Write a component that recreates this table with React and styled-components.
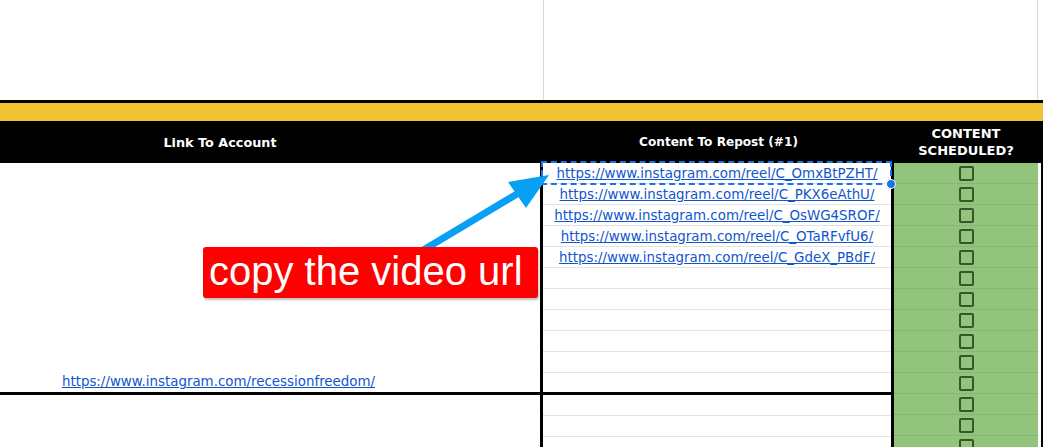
import styled, { createGlobalStyle } from "styled-components"

const GlobalStyle = createGlobalStyle`
  body {
    margin: 0;
    background: #fff;
    overflow: hidden;
  }
`

const Sheet = styled.div`
  position: relative;
  width: 1043px;
  height: 447px;
  overflow: hidden;
  font-family: "DejaVu Sans", "Liberation Sans", sans-serif;
`

const TopArea = styled.div`
  height: 100px;
  display: grid;
  grid-template-columns: 543px 495px 5px;
`

const TopGridCell = styled.div`
  border-left: 1px solid #dadada;
  border-right: 1px solid #dadada;
`

const BlackRule = styled.div`
  height: 3px;
  background: #000;
`

const YellowBand = styled.div`
  height: 18px;
  background: #f1c232;
`

const HeaderBar = styled.div`
  height: 42px;
  background: #000;
  display: grid;
  grid-template-columns: 543px 351px 144px 5px;
`

const HeaderCell = styled.div`
  display: flex;
  align-items: center;
  justify-content: center;
  text-align: center;
  padding-right: ${(p) => p.$shift || 0}px;
  color: #fff;
  font-weight: bold;
  font-size: ${(p) => p.$size || 12}px;
  line-height: 17px;
`

const Body = styled.div`
  display: flex;
`

const LeftPane = styled.div`
  width: 894px;
  display: flex;
  flex-direction: column;
`

const Section = styled.div`
  display: grid;
  grid-template-columns: 543px 351px;
  border-bottom: ${(p) => (p.$ruled ? "3px solid #000" : "none")};
`

const AccountCell = styled.div`
  box-sizing: border-box;
  border-right: 3px solid #000;
  display: flex;
  align-items: flex-end;
  justify-content: center;
  padding: 0 103px 3px 0;
`

const RepostColumn = styled.div`
  box-sizing: border-box;
  border-right: 3px solid #000;
  display: flex;
  flex-direction: column;
`

const RepostRow = styled.div`
  position: relative;
  box-sizing: border-box;
  height: ${(p) => p.$h}px;
  border-bottom: ${(p) => (p.$last ? "none" : "1px solid #e2e2e2")};
  display: flex;
  align-items: center;
  justify-content: center;
`

const SheetLink = styled.a`
  color: #1155cc;
  font-size: 13.4px;
  text-decoration: underline;
  white-space: nowrap;
`

const Selection = styled.div`
  position: absolute;
  left: -2px;
  top: -2px;
  right: -1px;
  bottom: -2px;
  border: 2px dashed #1a73e8;
  pointer-events: none;
`

const Handle = styled.div`
  position: absolute;
  right: -6px;
  bottom: -6px;
  width: 8px;
  height: 8px;
  border-radius: 50%;
  background: #1a73e8;
  border: 1px solid #fff;
`

const CheckColumn = styled.div`
  width: 144px;
  background: #93c47d;
  display: flex;
  flex-direction: column;
`

const CheckRow = styled.div`
  box-sizing: border-box;
  height: 21px;
  border-bottom: 1px solid #85b76f;
  display: flex;
  align-items: center;
  justify-content: center;
  padding-top: 1px;
`

const Checkbox = styled.div`
  box-sizing: border-box;
  width: 15px;
  height: 15px;
  border: 2px solid #37572a;
  border-radius: 2px;
`

const Edge = styled.div`
  width: 3px;
  background: #fff;
  border-right: 2px solid #000;
`

const Callout = styled.div`
  position: absolute;
  left: 203px;
  top: 247px;
  width: 335px;
  height: 51px;
  box-sizing: border-box;
  padding-left: 6px;
  padding-bottom: 4px;
  display: flex;
  align-items: center;
  background: #ff0000;
  border-radius: 3px;
  box-shadow: 1px 2px 2px rgba(0, 0, 0, 0.25);
  color: #fff;
  font-family: "Liberation Sans", Arial, sans-serif;
  font-size: 40px;
  line-height: 1;
`

const ArrowLayer = styled.svg`
  position: absolute;
  left: 0;
  top: 0;
  pointer-events: none;
`

const reels = ["C_OmxBtPZHT", "C_PKX6eAthU", "C_OsWG4SROF", "C_OTaRFvfU6", "C_GdeX_PBdF"]

const firstRows = Array.from({ length: 11 }, (_, i) => reels[i] || null)

export default function App() {
  return (
    <Sheet>
      <GlobalStyle />
      <TopArea>
        <div />
        <TopGridCell />
        <div />
      </TopArea>
      <BlackRule />
      <YellowBand />
      <HeaderBar>
        <HeaderCell $shift={103} $size={12.8}>Link To Account</HeaderCell>
        <HeaderCell $size={12.1}>Content To Repost (#1)</HeaderCell>
        <HeaderCell $size={13}>
          CONTENT
          <br />
          SCHEDULED?
        </HeaderCell>
        <div />
      </HeaderBar>
      <Body>
        <LeftPane>
          <Section $ruled>
            <AccountCell>
              <SheetLink>https://www.instagram.com/recessionfreedom/</SheetLink>
            </AccountCell>
            <RepostColumn>
              {firstRows.map((reel, i) => (
                <RepostRow key={i} $h={i === 10 ? 19 : 21} $last={i === 10}>
                  {reel && <SheetLink>https://www.instagram.com/reel/{reel}/</SheetLink>}
                  {i === 0 && (
                    <Selection>
                      <Handle />
                    </Selection>
                  )}
                </RepostRow>
              ))}
            </RepostColumn>
          </Section>
          <Section>
            <AccountCell />
            <RepostColumn>
              {[0, 1, 2].map((i) => (
                <RepostRow key={i} $h={21} />
              ))}
            </RepostColumn>
          </Section>
        </LeftPane>
        <CheckColumn>
          {Array.from({ length: 14 }, (_, i) => (
            <CheckRow key={i}>
              <Checkbox />
            </CheckRow>
          ))}
        </CheckColumn>
        <Edge />
      </Body>
      <ArrowLayer width="1043" height="447" viewBox="0 0 1043 447">
        <line x1="420" y1="252" x2="522" y2="191" stroke="#08a0f2" strokeWidth="7" />
        <polygon points="549,175 508,182 526,208" fill="#08a0f2" />
      </ArrowLayer>
      <Callout>copy the video url</Callout>
    </Sheet>
  )
}
